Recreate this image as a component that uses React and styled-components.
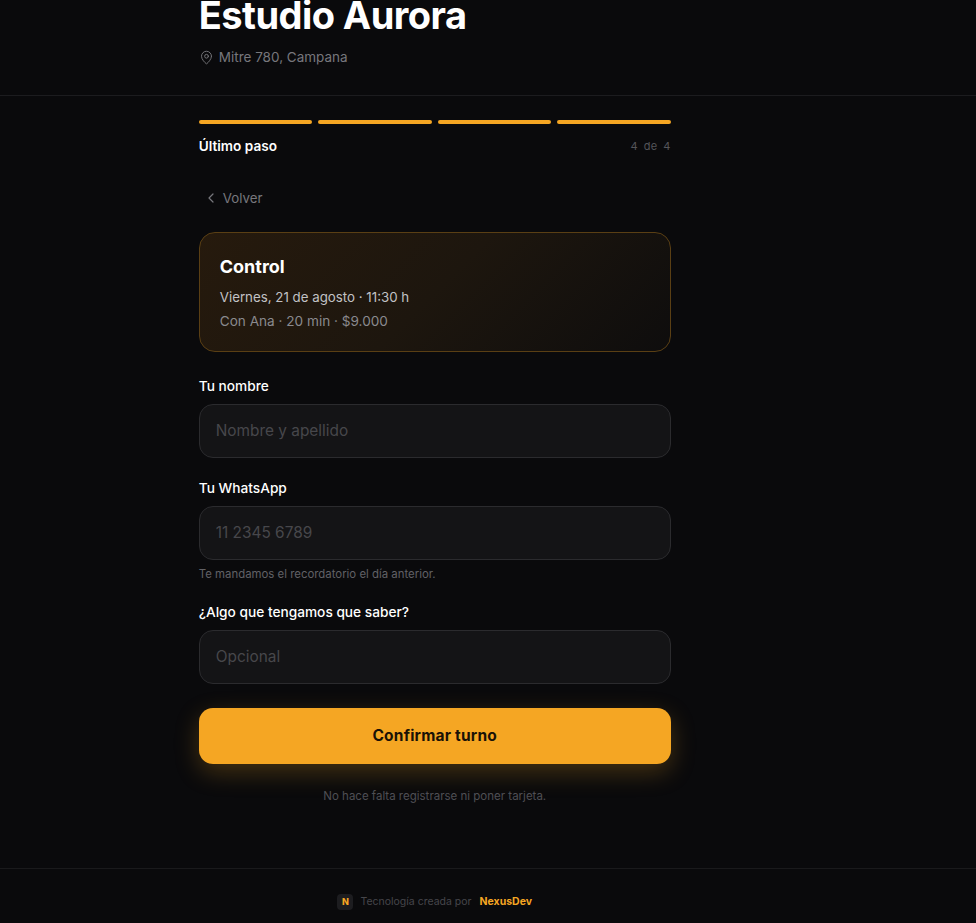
import React from "react";
import styled, { createGlobalStyle } from "styled-components";
import { MapPin, ChevronLeft } from "lucide-react";

const Global = createGlobalStyle`
  html, body { margin: 0; padding: 0; background: #0a0a0c; overflow: hidden; }
  body { font-family: Inter, "Liberation Sans", sans-serif; color: #fff; }
  * { box-sizing: border-box; }
`;

const Page = styled.div`
  height: 923px;
  overflow: hidden;
  display: flex;
  flex-direction: column;
`;

const Band = styled.div`
  flex-shrink: 0;
  padding-right: 106.5px;
  display: flex;
  justify-content: center;
`;

const Header = styled.header`
  flex-shrink: 0;
  margin-top: -8px;
  height: 104px;
  border-bottom: 1px solid #1c1c1f;
  padding-right: 106.5px;
  display: flex;
  justify-content: center;
`;

const Column = styled.div`
  width: 472px;
  display: flex;
  flex-direction: column;
`;

const Title = styled.h1`
  margin: 0;
  font-size: 38px;
  line-height: 47px;
  font-weight: 700;
  letter-spacing: -0.55px;
`;

const Address = styled.div`
  margin-top: 8px;
  display: flex;
  align-items: center;
  gap: 5px;
  font-size: 13.5px;
  line-height: 20px;
  color: #77777c;
`;

const Bars = styled.div`
  margin-top: 24px;
  display: grid;
  grid-template-columns: repeat(4, 1fr);
  gap: 6px;
`;

const Bar = styled.div`
  height: 4px;
  border-radius: 2px;
  background: #f5a623;
`;

const StepRow = styled.div`
  margin-top: 12px;
  display: flex;
  justify-content: space-between;
  align-items: center;
`;

const StepName = styled.span`
  font-size: 13.6px;
  line-height: 20px;
  font-weight: 600;
`;

const StepCount = styled.span`
  font-size: 11px;
  letter-spacing: 0.3px;
  word-spacing: 2.5px;
  color: #55555a;
`;

const Back = styled.div`
  margin-top: 32px;
  margin-left: 4px;
  display: flex;
  align-items: center;
  gap: 4px;
  font-size: 13.3px;
  line-height: 20px;
  color: #77777c;
`;

const Summary = styled.section`
  margin-top: 24px;
  height: 120px;
  padding: 22px 20px;
  border: 1px solid #5a3f14;
  border-radius: 16px;
  background: linear-gradient(135deg, #261a0d 0%, #1d160e 50%, #0e0d0d 100%);
`;

const ServiceName = styled.h2`
  margin: 0;
  font-size: 18px;
  line-height: 24px;
  font-weight: 700;
`;

const SummaryLine = styled.p`
  margin: ${(p) => (p.$first ? "8px" : "4px")} 0 0;
  font-size: ${(p) => (p.$first ? "13.3px" : "13.6px")};
  line-height: 20px;
  color: ${(p) => (p.$first ? "#c2c2c5" : "#8a8a8e")};
`;

const Field = styled.label`
  display: block;
  margin-top: ${(p) => p.$gap}px;
`;

const FieldLabel = styled.span`
  display: block;
  font-size: 13.7px;
  line-height: 20px;
  font-weight: 500;
`;

const Input = styled.input`
  display: block;
  width: 100%;
  height: 54px;
  margin-top: 8px;
  padding: 0 16px 2px;
  background: #141416;
  border: 1px solid #2b2b2e;
  border-radius: 14px;
  font-family: inherit;
  font-size: 15.4px;
  color: #fff;
  outline: none;
  &::placeholder { color: #47474b; opacity: 1; }
`;

const Hint = styled.p`
  margin: 6px 0 0;
  font-size: 11.4px;
  line-height: 16px;
  color: #616166;
`;

const Confirm = styled.button`
  display: block;
  width: 100%;
  height: 56px;
  margin-top: 24px;
  padding: 0 0 2px;
  border: 0;
  border-radius: 14px;
  background: #f5a623;
  color: #1a1206;
  font-family: inherit;
  font-size: 15.5px;
  font-weight: 700;
  letter-spacing: 0.2px;
  box-shadow: 0 8px 24px rgba(245, 166, 35, 0.25);
`;

const Disclaimer = styled.p`
  margin: 24px 0 0;
  text-align: center;
  font-size: 11.5px;
  line-height: 16px;
  color: #4f4f54;
`;

const Footer = styled.footer`
  flex-shrink: 0;
  margin-top: 64px;
  height: 66px;
  border-top: 1px solid #1a1a1c;
  padding-right: 106.5px;
  display: flex;
  justify-content: center;
  align-items: center;
  gap: 7px;
  font-size: 10.5px;
  color: #46464b;
`;

const LogoMark = styled.span`
  width: 16px;
  height: 16px;
  border-radius: 4px;
  background: #1d1d20;
  color: #f5a623;
  font-size: 9px;
  font-weight: 800;
  display: flex;
  align-items: center;
  justify-content: center;
`;

const Brand = styled.span`
  margin-left: 1px;
  font-weight: 700;
  color: #f5a623;
`;

export default function App() {
  return (
    <Page>
      <Global />
      <Header>
        <Column>
          <Title>Estudio Aurora</Title>
          <Address>
            <MapPin size={15} strokeWidth={1.5} />
            Mitre 780, Campana
          </Address>
        </Column>
      </Header>
      <Band>
        <Column>
          <Bars>
            {[0, 1, 2, 3].map((i) => (
              <Bar key={i} />
            ))}
          </Bars>
          <StepRow>
            <StepName>Último paso</StepName>
            <StepCount>4 de 4</StepCount>
          </StepRow>
          <Back>
            <ChevronLeft size={16} strokeWidth={1.8} />
            Volver
          </Back>
          <Summary>
            <ServiceName>Control</ServiceName>
            <SummaryLine $first>Viernes, 21 de agosto · 11:30 h</SummaryLine>
            <SummaryLine>Con Ana · 20 min · $9.000</SummaryLine>
          </Summary>
          <Field $gap={24}>
            <FieldLabel>Tu nombre</FieldLabel>
            <Input placeholder="Nombre y apellido" />
          </Field>
          <Field $gap={20}>
            <FieldLabel>Tu WhatsApp</FieldLabel>
            <Input placeholder="11 2345 6789" />
            <Hint>Te mandamos el recordatorio el día anterior.</Hint>
          </Field>
          <Field $gap={20}>
            <FieldLabel>¿Algo que tengamos que saber?</FieldLabel>
            <Input placeholder="Opcional" />
          </Field>
          <Confirm>Confirmar turno</Confirm>
          <Disclaimer>No hace falta registrarse ni poner tarjeta.</Disclaimer>
        </Column>
      </Band>
      <Footer>
        <LogoMark>N</LogoMark>
        Tecnología creada por
        <Brand>NexusDev</Brand>
      </Footer>
    </Page>
  );
}
